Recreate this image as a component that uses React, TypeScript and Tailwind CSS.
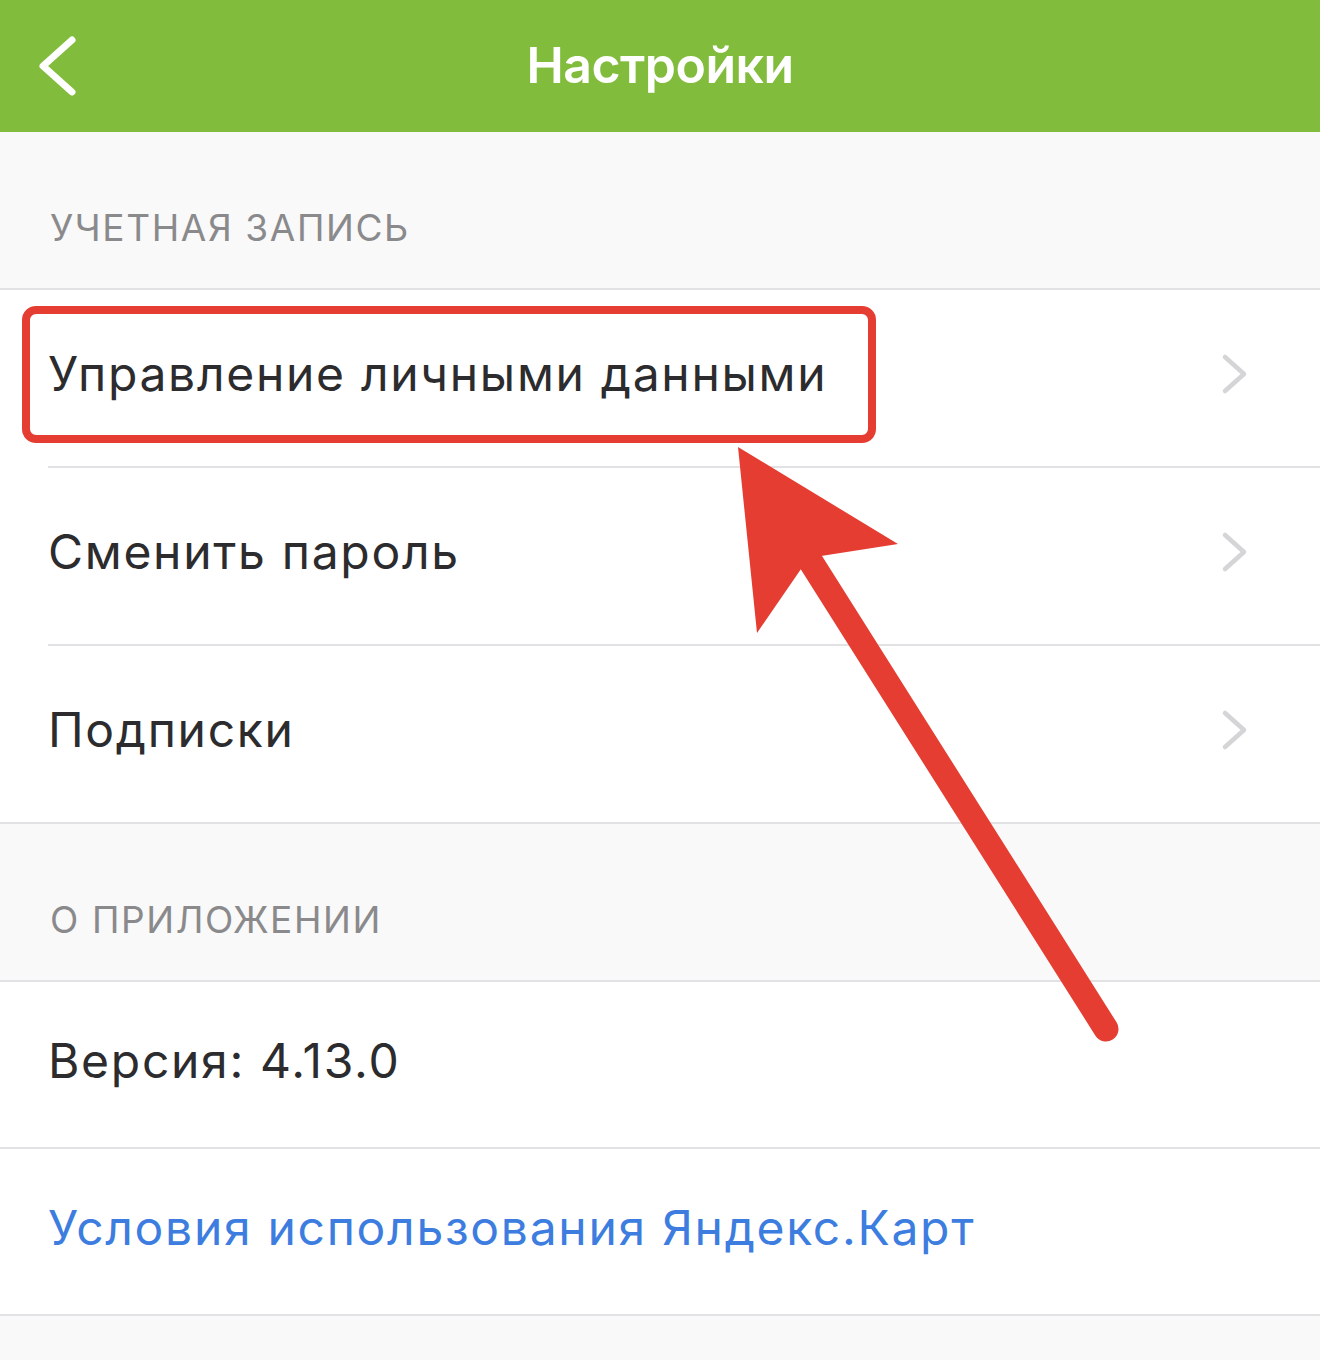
import React from "react";

function Chevron() {
  return (
    <svg width="30" height="46" viewBox="0 0 30 46" className="shrink-0">
      <path d="M5 6 L24 23 L5 40" fill="none" stroke="#d5d5d7" strokeWidth="4.5" strokeLinecap="round" strokeLinejoin="round" />
    </svg>
  );
}

function Row({ label, inset = true, chevron = true, color = "text-[#2c2c2e]", h = "h-[178px]" }: { label: string; inset?: boolean; chevron?: boolean; color?: string; h?: string }) {
  return (
    <div className={`bg-white ${h} ${inset ? "pl-[48px]" : ""}`}>
      <div className={`h-full flex items-center justify-between border-b-2 border-[#e2e2e4] pr-[70px] pb-[8px] ${inset ? "" : "pl-[48px]"}`}>
        <span className={`text-[48px] ${color} tracking-[1.7px]`}>{label}</span>
        {chevron && <Chevron />}
      </div>
    </div>
  );
}

function SectionHeader({ label }: { label: string }) {
  return (
    <div className="h-[158px] bg-[#f9f9f9] border-b-2 border-[#e2e2e4] flex items-end px-[50px] pb-[33px]">
      <span className="text-[37px] text-[#8a8a8c] tracking-[1.6px]">{label}</span>
    </div>
  );
}

export default function App() {
  return (
    <div className="w-[1320px] h-[1360px] bg-[#f9f9f9] relative overflow-hidden" style={{ fontFamily: "Inter, 'Noto Sans', sans-serif" }}>
      <header className="h-[132px] bg-[#82bc3c] grid grid-cols-[1fr_auto_1fr] items-center">
        <div className="pl-[36px] flex items-center">
          <svg width="44" height="64" viewBox="0 0 44 64">
            <path d="M36 6 L7 32 L36 58" fill="none" stroke="#ffffff" strokeWidth="7" strokeLinecap="round" strokeLinejoin="round" />
          </svg>
        </div>
        <h1 className="text-white text-[50px] font-semibold tracking-[-0.5px] pb-[2px]">Настройки</h1>
        <div />
      </header>

      <SectionHeader label="УЧЕТНАЯ ЗАПИСЬ" />
      <Row label="Управление личными данными" />
      <Row label="Сменить пароль" />
      <Row label="Подписки" inset={false} />

      <SectionHeader label="О ПРИЛОЖЕНИИ" />
      <Row label="Версия: 4.13.0" inset={false} chevron={false} h="h-[167px]" />
      <Row label="Условия использования Яндекс.Карт" inset={false} chevron={false} color="text-[#3c7ddf]" h="h-[167px]" />

      {/* annotation: red highlight box */}
      <div className="absolute left-[22px] top-[306px] w-[854px] h-[137px] border-[8px] border-[#e53d32] rounded-[14px] pointer-events-none" />

      {/* annotation: red arrow */}
      <svg className="absolute left-0 top-0 pointer-events-none" width="1320" height="1360" viewBox="0 0 1320 1360">
        <line x1="811" y1="562" x2="1106" y2="1029" stroke="#e53d32" strokeWidth="25" strokeLinecap="round" />
        <polygon points="738,447 898,544 821,556 801,569 757,633" fill="#e53d32" />
      </svg>
    </div>
  );
}
